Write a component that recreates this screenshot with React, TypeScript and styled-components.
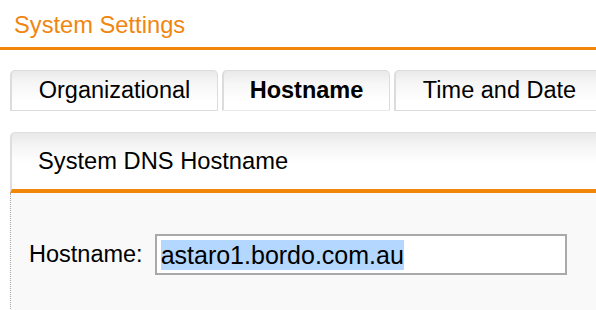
import React from "react";
import styled, { createGlobalStyle } from "styled-components";

const GlobalStyle = createGlobalStyle`
  html, body {
    margin: 0;
    padding: 0;
    background: #fff;
    overflow: hidden;
  }
  body {
    font-family: "Liberation Sans", Arial, sans-serif;
    color: #000;
  }
`;

const Page = styled.div`
  width: 596px;
  height: 310px;
  overflow: hidden;
`;

const Title = styled.h1`
  margin: 0;
  padding: 11px 0 8px 14px;
  height: 28px;
  line-height: 28px;
  font-size: 23.7px;
  font-weight: normal;
  color: #f0860f;
  border-bottom: 3px solid #f0860a;
`;

const TabRow = styled.div`
  display: flex;
  gap: 4px;
  margin-top: 20px;
  padding-left: 10px;
  white-space: nowrap;
`;

const Tab = styled.div<{ $active?: boolean; $width: number }>`
  flex: none;
  box-sizing: border-box;
  width: ${(p) => p.$width}px;
  height: 41px;
  line-height: 38px;
  text-align: center;
  font-size: 23.5px;
  font-weight: ${(p) => (p.$active ? "bold" : "normal")};
  border: 1px solid #dcdcdc;
  border-left-width: 2px;
  border-bottom-color: ${(p) => (p.$active ? "transparent" : "#dcdcdc")};
  border-radius: 5px 5px 0 0;
  background: linear-gradient(#e9e9e9 0, #f6f6f6 12px, #fff 30px);
`;

const Panel = styled.section`
  margin-top: 21px;
  margin-left: 10px;
  width: 620px;
`;

const PanelHeader = styled.div`
  box-sizing: border-box;
  height: 61px;
  padding-left: 26px;
  line-height: 56px;
  font-size: 23.7px;
  border: 1px solid #dedede;
  border-left-width: 2px;
  border-bottom: 4px solid #f0860a;
  border-radius: 5px 0 0 0;
  background: linear-gradient(#e8e8e8 0, #f4f4f4 12px, #fff 30px);
`;

const PanelBody = styled.div`
  height: 140px;
  box-sizing: border-box;
  padding: 41px 0 0 18px;
  background: #f9f9f9;
  border-left: 1px dotted #a8a8a8;
  display: flex;
  align-items: flex-start;
`;

const FieldRow = styled.div`
  display: flex;
  align-items: center;
  gap: 12px;
`;

const Label = styled.label`
  font-size: 23.5px;
`;

const TextBox = styled.div`
  box-sizing: border-box;
  width: 412px;
  height: 41px;
  padding: 0 4px;
  display: flex;
  align-items: center;
  background: #fff;
  border: 2px solid #a9a9a9;
  font-size: 25px;
`;

const Selected = styled.span`
  background: #b3d7fe;
  line-height: 30px;
`;

export default function App() {
  return (
    <Page>
      <GlobalStyle />
      <Title>System Settings</Title>
      <TabRow>
        <Tab $width={208}>Organizational</Tab>
        <Tab $width={168} $active>
          Hostname
        </Tab>
        <Tab $width={210}>Time and Date</Tab>
      </TabRow>
      <Panel>
        <PanelHeader>System DNS Hostname</PanelHeader>
        <PanelBody>
          <FieldRow>
            <Label>Hostname:</Label>
            <TextBox>
              <Selected>astaro1.bordo.com.au</Selected>
            </TextBox>
          </FieldRow>
        </PanelBody>
      </Panel>
    </Page>
  );
}
